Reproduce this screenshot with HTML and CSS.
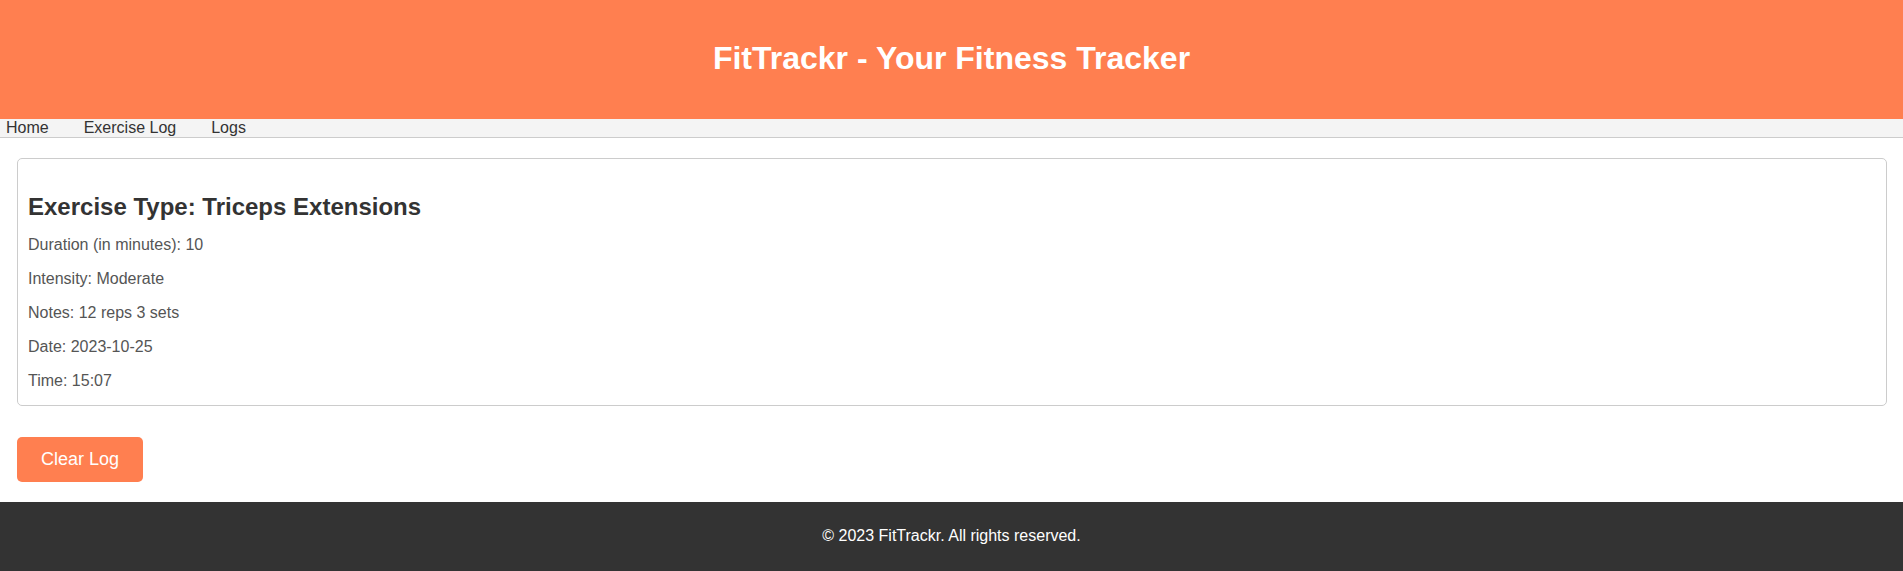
FILE: index.html
```html
<!DOCTYPE html>
<html lang="en">
<head>
<meta charset="UTF-8">
<title>FitTrackr - Your Fitness Tracker</title>
<link rel="stylesheet" href="styles.css">
</head>
<body>
<header class="site-header">
  <h1 class="site-title">FitTrackr - Your Fitness Tracker</h1>
</header>
<nav class="site-nav">
  <a class="nav-link" href="#">Home</a>
  <a class="nav-link" href="#">Exercise Log</a>
  <a class="nav-link" href="#">Logs</a>
</nav>
<main class="content">
  <section class="log-card">
    <h2 class="log-title">Exercise Type: Triceps Extensions</h2>
    <p class="log-line">Duration (in minutes): 10</p>
    <p class="log-line">Intensity: Moderate</p>
    <p class="log-line">Notes: 12 reps 3 sets</p>
    <p class="log-line">Date: 2023-10-25</p>
    <p class="log-line">Time: 15:07</p>
  </section>
  <button class="clear-btn" type="button">Clear Log</button>
</main>
<footer class="site-footer">
  <p class="footer-text">© 2023 FitTrackr. All rights reserved.</p>
</footer>
</body>
</html>
```
FILE: styles.css
```css
* {
  box-sizing: border-box;
}

body {
  margin: 0;
  font-family: "Liberation Sans", Arial, sans-serif;
  color: #333;
  background: #fff;
}

.site-header {
  background: #ff7f50;
  color: #fff;
  height: 119px;
  padding-top: 40px;
  text-align: center;
}

.site-title {
  margin: 0;
  font-size: 32px;
  line-height: 36px;
  font-weight: bold;
}

.site-nav {
  display: flex;
  gap: 35px;
  height: 19px;
  padding-left: 6px;
  background: #f4f4f4;
  border-bottom: 1px solid #ccc;
}

.nav-link {
  color: #333;
  text-decoration: none;
  font-size: 16px;
  line-height: 18px;
}

.content {
  padding: 20px 16px 20px 17px;
  display: flex;
  flex-direction: column;
  align-items: flex-start;
}

.log-card {
  align-self: stretch;
  border: 1px solid #ccc;
  border-radius: 5px;
  padding: 34px 10px 15px;
}

.log-title {
  margin: 0 0 15px;
  font-size: 24px;
  line-height: 28px;
  font-weight: bold;
  color: #333;
}

.log-line {
  margin: 0 0 16px;
  font-size: 16px;
  line-height: 18px;
  color: #555;
}

.log-line:last-child {
  margin-bottom: 0;
}

.clear-btn {
  margin-top: 31px;
  background: #ff7f50;
  color: #fff;
  border: none;
  border-radius: 5px;
  padding: 12px 24px;
  height: 45px;
  font-family: "Liberation Sans", Arial, sans-serif;
  font-size: 18px;
  line-height: 21px;
  cursor: pointer;
}

.site-footer {
  background: #333;
  color: #fff;
  text-align: center;
  padding: 25px 0 27px;
}

.footer-text {
  margin: 0;
  font-size: 16px;
  line-height: 18px;
}
```
